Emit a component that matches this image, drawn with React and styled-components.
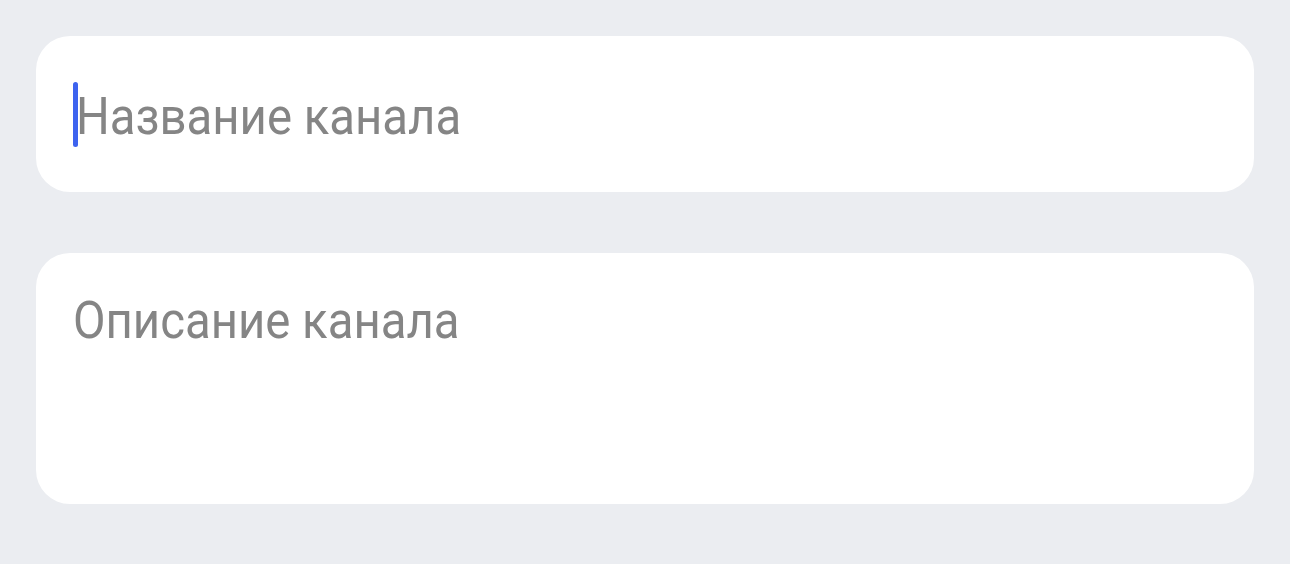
import React from "react";
import styled, { createGlobalStyle } from "styled-components";

const GlobalStyle = createGlobalStyle`
  html, body {
    margin: 0;
    padding: 0;
    background: #ebedf1;
  }
  body {
    font-family: Roboto, "Liberation Sans", sans-serif;
  }
`;

const Page = styled.div`
  display: flex;
  flex-direction: column;
  gap: 61px;
  padding: 36px;
  min-height: 564px;
  box-sizing: border-box;
`;

const Card = styled.div`
  background: #ffffff;
  border-radius: 34px;
  height: ${(p) => p.height}px;
  box-sizing: border-box;
  display: flex;
  align-items: flex-start;
  padding: ${(p) => p.pad};
`;

const Placeholder = styled.span`
  display: block;
  font-size: 52px;
  line-height: 1;
  color: #858585;
  white-space: nowrap;
  transform: scaleX(0.91);
  transform-origin: left center;
`;

const Caret = styled.span`
  display: block;
  width: 5.5px;
  height: 65px;
  margin-top: -9px;
  margin-right: -2px;
  border-radius: 3px;
  background: #3d63ef;
  flex-shrink: 0;
`;

export default function App() {
  return (
    <>
      <GlobalStyle />
      <Page>
        <Card height={156} pad="54.5px 36px 0 36.5px">
          <Caret />
          <Placeholder>Название канала</Placeholder>
        </Card>
        <Card height={251} pad="42px 36px 0 36.5px">
          <Placeholder>Описание канала</Placeholder>
        </Card>
      </Page>
    </>
  );
}
